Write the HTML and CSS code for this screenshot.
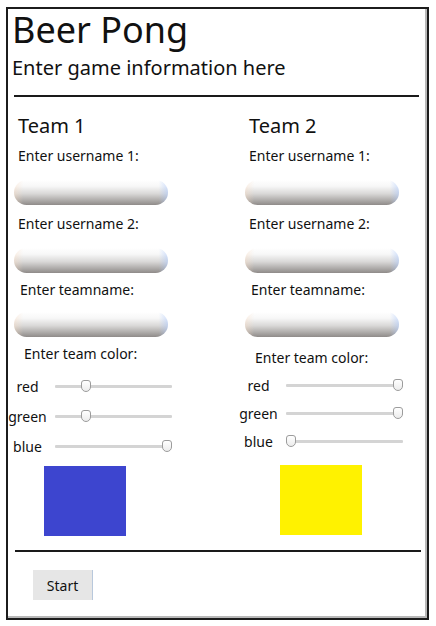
FILE: index.html
```html
<!DOCTYPE html>
<html>
<head>
<meta charset="utf-8">
<link rel="stylesheet" href="styles.css">
</head>
<body>
<div class="frame">
  <h1 class="title">Beer Pong</h1>
  <p class="subtitle">Enter game information here</p>
  <hr class="rule rule-top">
  <div class="teams">
    <section class="team team-1">
      <h2 class="team-name">Team 1</h2>
      <label class="lbl">Enter username 1:</label>
      <div class="pill"></div>
      <label class="lbl">Enter username 2:</label>
      <div class="pill"></div>
      <label class="lbl lbl-team">Enter teamname:</label>
      <div class="pill"></div>
      <label class="lbl lbl-color">Enter team color:</label>
      <div class="sliders">
        <div class="srow"><span class="sname">red</span><input class="range" type="range" min="0" max="255" value="62"></div>
        <div class="srow"><span class="sname">green</span><input class="range" type="range" min="0" max="255" value="62"></div>
        <div class="srow"><span class="sname">blue</span><input class="range" type="range" min="0" max="255" value="255"></div>
      </div>
      <div class="swatch swatch-blue"></div>
    </section>
    <section class="team team-2">
      <h2 class="team-name">Team 2</h2>
      <label class="lbl">Enter username 1:</label>
      <div class="pill"></div>
      <label class="lbl">Enter username 2:</label>
      <div class="pill"></div>
      <label class="lbl lbl-team">Enter teamname:</label>
      <div class="pill"></div>
      <label class="lbl lbl-color">Enter team color:</label>
      <div class="sliders sliders-tight">
        <div class="srow"><span class="sname">red</span><input class="range" type="range" min="0" max="255" value="255"></div>
        <div class="srow"><span class="sname">green</span><input class="range" type="range" min="0" max="255" value="255"></div>
        <div class="srow"><span class="sname">blue</span><input class="range" type="range" min="0" max="255" value="0"></div>
      </div>
      <div class="swatch swatch-yellow"></div>
    </section>
  </div>
  <hr class="rule rule-bottom">
  <button class="start">Start</button>
</div>
</body>
</html>
```
FILE: styles.css
```css
* { box-sizing: border-box; }
html, body { margin: 0; padding: 0; background: #fff; }
body {
  font-family: "Noto Sans", "Open Sans", sans-serif;
  color: #111;
}
.frame {
  margin: 7px 0 0 6px;
  width: 423px;
  height: 613px;
  border: 2px solid #1c1c1c;
  box-shadow: inset -2px -2px 0 #b8b8b8;
  padding: 0 0 0 4px;
}
.title {
  margin: 0;
  font-weight: 400;
  font-size: 36px;
  line-height: 42px;
}
.subtitle {
  margin: 4px 0 0 0;
  font-size: 20px;
  line-height: 26px;
}
.rule {
  border: 0;
  height: 2px;
  background: #1a1a1a;
  margin: 0;
}
.rule-top { margin: 14px 0 0 2px; width: 405px; }
.rule-bottom { margin: 14px 0 0 3px; width: 406px; }
.teams {
  display: grid;
  grid-template-columns: 231px 1fr;
}
.team { display: flex; flex-direction: column; align-items: flex-start; }
.team-name {
  margin: 17px 0 0 6px;
  font-weight: 400;
  font-size: 20px;
  line-height: 24px;
}
.lbl {
  font-size: 14px;
  line-height: 18px;
  margin: 10px 0 0 6px;
}
.team-name + .lbl { margin-top: 9px; }
.pill {
  width: 154px;
  height: 25px;
  border-radius: 13px;
  margin: 15px 0 0 2px;
  background:
    linear-gradient(to right, rgba(255,220,190,0.35) 0%, rgba(255,255,255,0) 6%, rgba(255,255,255,0) 94%, rgba(170,200,255,0.5) 100%),
    linear-gradient(to bottom, #ffffff 0%, #f7f7f7 25%, #d9d8d7 55%, #a8a5a3 85%, #8f8b89 100%);
}
.lbl-team { margin-left: 8px; margin-top: 8px; }
.lbl-team + .pill { margin-top: 13px; }
.lbl-color { margin-left: 12px; margin-top: 8px; }
.team-2 .lbl-color { margin-top: 12px; }
.sliders { display: flex; flex-direction: column; margin-top: 8px; }
.sliders-tight { margin-top: 4px; }
.srow {
  display: flex;
  align-items: center;
  height: 30px;
  font-size: 14px;
  gap: 12px;
}
.sliders-tight .srow { height: 28px; }
.sname { width: 31px; display: flex; justify-content: center; white-space: nowrap; }
.range {
  -webkit-appearance: none;
  appearance: none;
  width: 117px;
  height: 14px;
  margin: 0;
  background: transparent;
}
.range::-webkit-slider-runnable-track {
  height: 3px;
  background: #d4d4d4;
  border-radius: 1px;
}
.range::-webkit-slider-thumb {
  -webkit-appearance: none;
  width: 10px;
  height: 12px;
  margin-top: -5px;
  background: linear-gradient(#ffffff, #ececec);
  border: 1px solid #9c9c9c;
  border-radius: 3px 3px 5px 5px;
}
.swatch {
  width: 82px;
  height: 70px;
  margin: 5px 0 0 32px;
}
.swatch-blue { background: #3d45cf; }
.swatch-yellow { background: #fff200; margin-left: 37px; margin-top: 10px; }
.start {
  margin: 18px 0 0 21px;
  width: 60px;
  height: 30px;
  border: 0;
  border-right: 1px solid #b8c8dc;
  background: #e6e6e6;
  font-family: inherit;
  font-size: 14px;
  color: #111;
  padding: 0;
}
```
